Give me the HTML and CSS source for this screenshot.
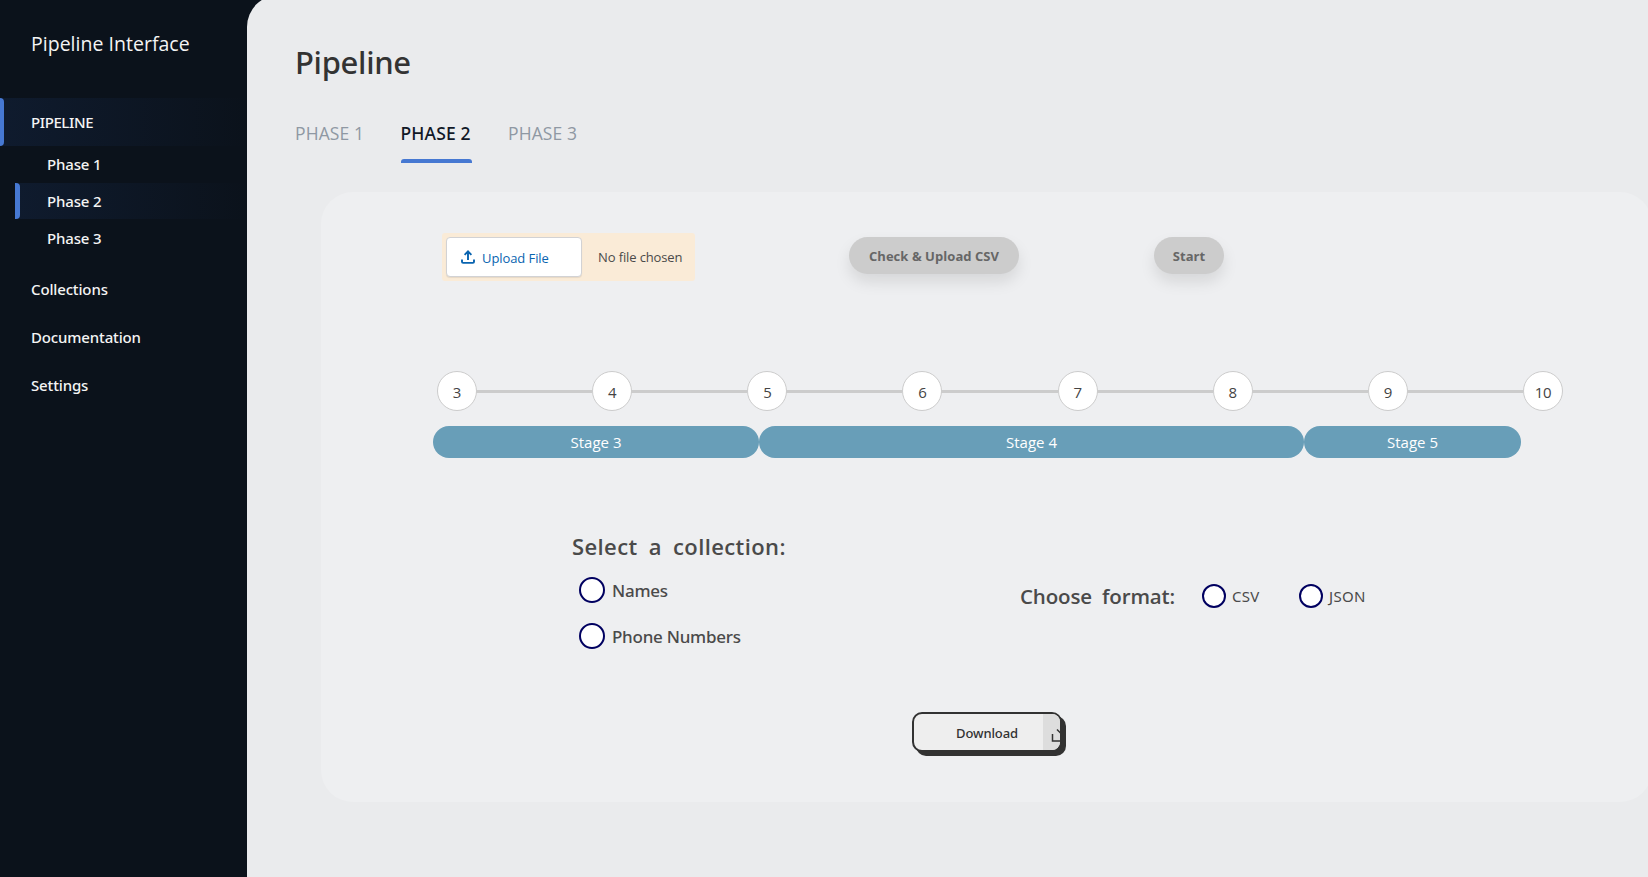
FILE: index.html
```
<!DOCTYPE html>
<html lang="en">
<head>
<meta charset="utf-8">
<title>Pipeline Interface</title>
<link rel="stylesheet" href="styles.css">
</head>
<body>
<div class="app">
  <aside class="sidebar">
    <div class="brand"><span class="brand-name">Pipeline Interface</span></div>
    <nav class="menu">
      <a class="menu-item active upper"><span>PIPELINE</span></a>
      <div class="submenu">
        <a class="sub-item"><span>Phase 1</span></a>
        <a class="sub-item active"><span>Phase 2</span></a>
        <a class="sub-item"><span>Phase 3</span></a>
      </div>
      <a class="menu-item"><span>Collections</span></a>
      <a class="menu-item docs"><span>Documentation</span></a>
      <a class="menu-item"><span>Settings</span></a>
    </nav>
  </aside>
  <main class="main">
    <h1 class="title">Pipeline</h1>
    <div class="tabs">
      <a class="tab">PHASE 1</a>
      <a class="tab current">PHASE 2</a>
      <a class="tab">PHASE 3</a>
    </div>
    <section class="card">
      <div class="actions">
        <div class="file">
          <button class="file-btn">
            <svg class="file-icon" viewBox="0 0 14 14" width="14" height="14"><path d="M1 9.5v2.3c0 .7.4 1.1 1.1 1.1h9.8c.7 0 1.1-.4 1.1-1.1V9.5M7 10V1.6M3.6 4.8L7 1.4l3.4 3.4" fill="none" stroke="#0964b0" stroke-width="1.9"/></svg>
            <span>Upload File</span>
          </button>
          <span class="file-name">No file chosen</span>
        </div>
        <button class="pill check">Check &amp; Upload CSV</button>
        <button class="pill start">Start</button>
      </div>
      <div class="steps">
        <span class="step">3</span><i class="line"></i>
        <span class="step">4</span><i class="line"></i>
        <span class="step">5</span><i class="line"></i>
        <span class="step">6</span><i class="line"></i>
        <span class="step">7</span><i class="line"></i>
        <span class="step">8</span><i class="line"></i>
        <span class="step">9</span><i class="line"></i>
        <span class="step">10</span>
      </div>
      <div class="stages">
        <div class="stage three">Stage 3</div>
        <div class="stage five">Stage 4</div>
        <div class="stage two">Stage 5</div>
      </div>
      <div class="options">
        <div class="collection">
          <h2 class="label">Select a collection:</h2>
          <label class="choice"><i class="radio"></i><span>Names</span></label>
          <label class="choice phone"><i class="radio"></i><span>Phone Numbers</span></label>
        </div>
        <div class="format">
          <h2 class="label small">Choose format:</h2>
          <label class="choice compact csv"><i class="radio"></i><span>CSV</span></label>
          <label class="choice compact json"><i class="radio"></i><span>JSON</span></label>
        </div>
      </div>
      <button class="download">
        <span class="download-text">Download</span>
        <span class="download-icon"><svg viewBox="0 0 17 36" width="17" height="36"><path d="M9.5 20v7h12M14 15.5l6 6" fill="none" stroke="#323232" stroke-width="1.5"/></svg></span>
      </button>
    </section>
  </main>
</div>
</body>
</html>
```
FILE: styles.css
```
* { box-sizing: border-box; }
body {
  margin: 0;
  height: 877px;
  overflow: hidden;
  background: #0b121b;
  font-family: "Segoe UI", "Open Sans", "Noto Sans", sans-serif;
}
button { font-family: inherit; }
.app { display: flex; height: 877px; }
.sidebar { flex: none; width: 247px; color: #f4f4f4; }
.brand { height: 98px; padding: 27px 0 0 31px; font-size: 19.5px; line-height: 34px; letter-spacing: 0.02px; white-space: nowrap; }
.menu { font-family: "Segoe UI", "Noto Sans", "Open Sans", sans-serif; font-size: 15px; font-weight: 500; letter-spacing: -0.15px; }
.menu-item { display: flex; align-items: center; height: 48px; padding: 0 0 2px 31px; }
.menu-item.active, .sub-item.active { background: linear-gradient(90deg, #0f1b2e, #0b121b); }
.menu-item.active { padding: 0; }
.menu-item.active::before, .sub-item.active::before { content: ""; align-self: stretch; width: 4px; margin: 0 27px 0 0; border-radius: 0 4px 4px 0; background: #4678d2; }
.sub-item.active::before { width: 5px; }
.upper { letter-spacing: -0.4px; }
.submenu { padding: 0 0 10px 15px; }
.sub-item { display: flex; align-items: center; height: 36.7px; padding: 0 0 0 32px; }
.sub-item.active { padding-left: 0; }
.main {
  flex: none;
  width: 1405px;
  height: 890px;
  margin-top: -5px;
  padding: 5px 0 0 48px;
  border-radius: 32px 0 0 0;
  background: #eaebed;
}
.title { margin: 0; padding-top: 40px; height: 112px; font-family: "Segoe UI", "Noto Sans", "Open Sans", sans-serif; font-size: 31px; font-weight: 500; line-height: 44px; letter-spacing: -0.3px; color: #333; }
.tabs { display: flex; gap: 36.5px; height: 80px; font-size: 17.5px; color: #8f98a3; letter-spacing: 0.1px; }
.tab { height: 51px; line-height: 42px; white-space: nowrap; }
.tab.current { color: #111827; letter-spacing: 0.12px; font-family: "Segoe UI", "Noto Sans", "Open Sans", sans-serif; font-weight: 500; width: 71px; }
.tab.current::after { content: ""; display: block; height: 4px; margin-top: 5px; border-radius: 3px 3px 0 0; background: #4678d2; }
.card { width: 1331px; height: 610px; margin-left: 26px; padding: 41px 0 0 112px; border-radius: 32px; background: #eeeff1; }
.actions { display: flex; align-items: flex-start; height: 138px; padding-left: 9px; }
.file { display: flex; align-items: center; width: 253px; height: 48px; padding: 4px; border-radius: 3px; background: #faebd7; }
.file-btn { display: flex; align-items: center; gap: 7px; width: 136px; height: 40px; padding: 2px 0 0 14px; border: 1px solid #d2d2d4; border-radius: 4px; background: #fff; box-shadow: 0 1px 1px rgba(0,0,0,.08); color: #0964b0; font-size: 13px; letter-spacing: -0.08px; }
.file-icon { margin-top: -3px; }
.file-name { margin: -1px 0 0 16px; font-size: 13px; letter-spacing: -0.12px; color: #4a4a4a; white-space: nowrap; }
.pill { height: 37px; margin-top: 4px; padding: 0; border: 0; border-radius: 19px; background: #ccc; color: #666; font-size: 13px; font-weight: 700; letter-spacing: 0.05px; box-shadow: 0 8px 15px rgba(0,0,0,.1); }
.check { width: 170px; margin-left: 154px; }
.start { width: 70px; margin-left: 135px; }
.steps { display: flex; align-items: center; width: 1126px; height: 40px; margin-left: 4px; }
.step { flex: none; width: 40px; height: 40px; border: 1px solid #ccc; border-radius: 50%; background: #fff; color: #444; font-size: 15px; line-height: 41px; letter-spacing: -0.3px; text-align: center; }
.line { flex: 1; height: 3px; margin-left: -1px; background: #ccc; }
.stages { display: flex; width: 1088px; height: 32px; margin-top: 15px; }
.stage { border-radius: 16px; background: #689eb8; color: #fff; font-size: 15px; line-height: 33px; text-align: center; }
.three { width: 326px; }
.five { width: 545px; }
.two { width: 217px; }
.options { display: flex; height: 254px; padding: 71px 0 0 139px; }
.collection { width: 448px; }
.label { margin: 0; font-family: "Comic Sans MS", "Open Sans", sans-serif; font-size: 22px; font-weight: 600; line-height: 34px; letter-spacing: 0.4px; word-spacing: 5px; color: #4a4a4a; white-space: nowrap; }
.choice { display: flex; align-items: center; gap: 7px; height: 46px; padding: 3px 0 0 7px; font-family: "Segoe UI", "Noto Sans", "Open Sans", sans-serif; font-size: 17px; font-weight: 500; letter-spacing: -0.25px; color: #4a4a4a; }
.collection .label { margin-bottom: 3px; }
.radio { flex: none; width: 26px; height: 26px; margin-top: -2px; border: 2px solid #000060; border-radius: 50%; background: #fff; }
.format { display: flex; align-items: center; height: 40px; margin-top: 47px; }
.small { width: 182px; font-size: 20.5px; letter-spacing: -0.15px; }
.compact { height: 40px; gap: 6px; padding: 0; font-size: 15px; font-weight: 400; letter-spacing: 0.3px; }
.compact .radio { width: 24px; height: 24px; margin-top: -1px; }
.csv { width: 97px; }
.download { display: flex; width: 150px; height: 40px; margin-left: 479px; padding: 0; overflow: hidden; border: 2px solid #323232; border-radius: 10px; background: #eee; box-shadow: 4px 4px #323232; color: #323232; }
.download-text { width: 129px; padding-left: 42px; font-family: "Segoe UI", "Noto Sans", "Open Sans", sans-serif; font-size: 13px; font-weight: 500; letter-spacing: -0.1px; line-height: 38px; text-align: left; }
.download-icon { width: 17px; height: 36px; overflow: hidden; background: #ddd; }
```
